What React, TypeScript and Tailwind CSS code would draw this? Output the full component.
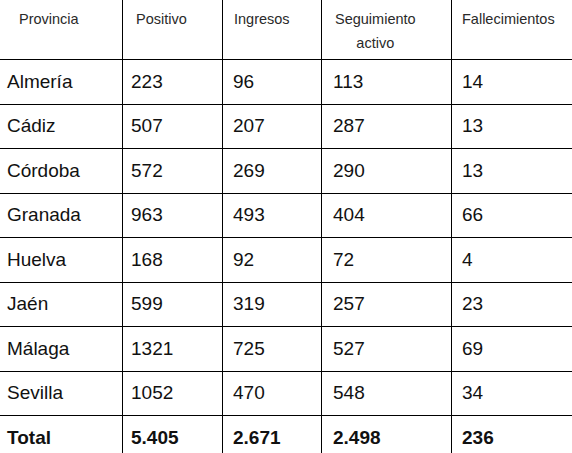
const rows: [string, string, string, string, string][] = [
  ['Almería', '223', '96', '113', '14'],
  ['Cádiz', '507', '207', '287', '13'],
  ['Córdoba', '572', '269', '290', '13'],
  ['Granada', '963', '493', '404', '66'],
  ['Huelva', '168', '92', '72', '4'],
  ['Jaén', '599', '319', '257', '23'],
  ['Málaga', '1321', '725', '527', '69'],
  ['Sevilla', '1052', '470', '548', '34'],
];

const total = ['Total', '5.405', '2.671', '2.498', '236'];

// left padding per column, body cells
const bodyPad = ['pl-[7px]', 'pl-[8px]', 'pl-[10px]', 'pl-[11px]', 'pl-[10px]'];

export default function App() {
  return (
    <main className="w-[572px] h-[453px] overflow-hidden bg-white font-['Liberation_Sans',Arial,sans-serif]">
      <div className="grid grid-cols-[123px_100px_99px_130px_1fr] grid-rows-[60px_45px_44px_45px_44px_45px_44px_45px_44px_45px] w-[600px]">
        {/* Header */}
        <div className="border-r border-b border-black pl-[19px] pt-[7px] text-[14.5px] leading-[24px] text-[#2a2a2a]">
          Provincia
        </div>
        <div className="border-r border-b border-black pl-[13px] pt-[7px] text-[14.5px] leading-[24px] text-[#2a2a2a]">
          Positivo
        </div>
        <div className="border-r border-b border-black pl-[11px] pt-[7px] text-[14.5px] leading-[24px] text-[#2a2a2a]">
          Ingresos
        </div>
        <div className="border-r border-b border-black pl-[13px] pt-[7px] text-[14.5px] leading-[24px] text-[#2a2a2a]">
          <div className="inline-block text-center">
            Seguimiento
            <br />
            activo
          </div>
        </div>
        <div className="border-b border-black pl-[10px] pt-[7px] text-[14.5px] leading-[24px] text-[#2a2a2a]">
          Fallecimientos
        </div>

        {rows.map((r) =>
          r.map((v, i) => (
            <div
              key={r[0] + i}
              className={`flex items-center border-b border-black text-[19px] text-[#111] ${bodyPad[i]} ${i < 4 ? 'border-r' : ''}`}
            >
              {v}
            </div>
          ))
        )}

        {total.map((v, i) => (
          <div
            key={'t' + i}
            className={`flex items-center border-b border-black text-[19px] font-bold text-[#111] ${bodyPad[i]} ${i < 4 ? 'border-r' : ''}`}
          >
            {v}
          </div>
        ))}
      </div>
    </main>
  );
}
